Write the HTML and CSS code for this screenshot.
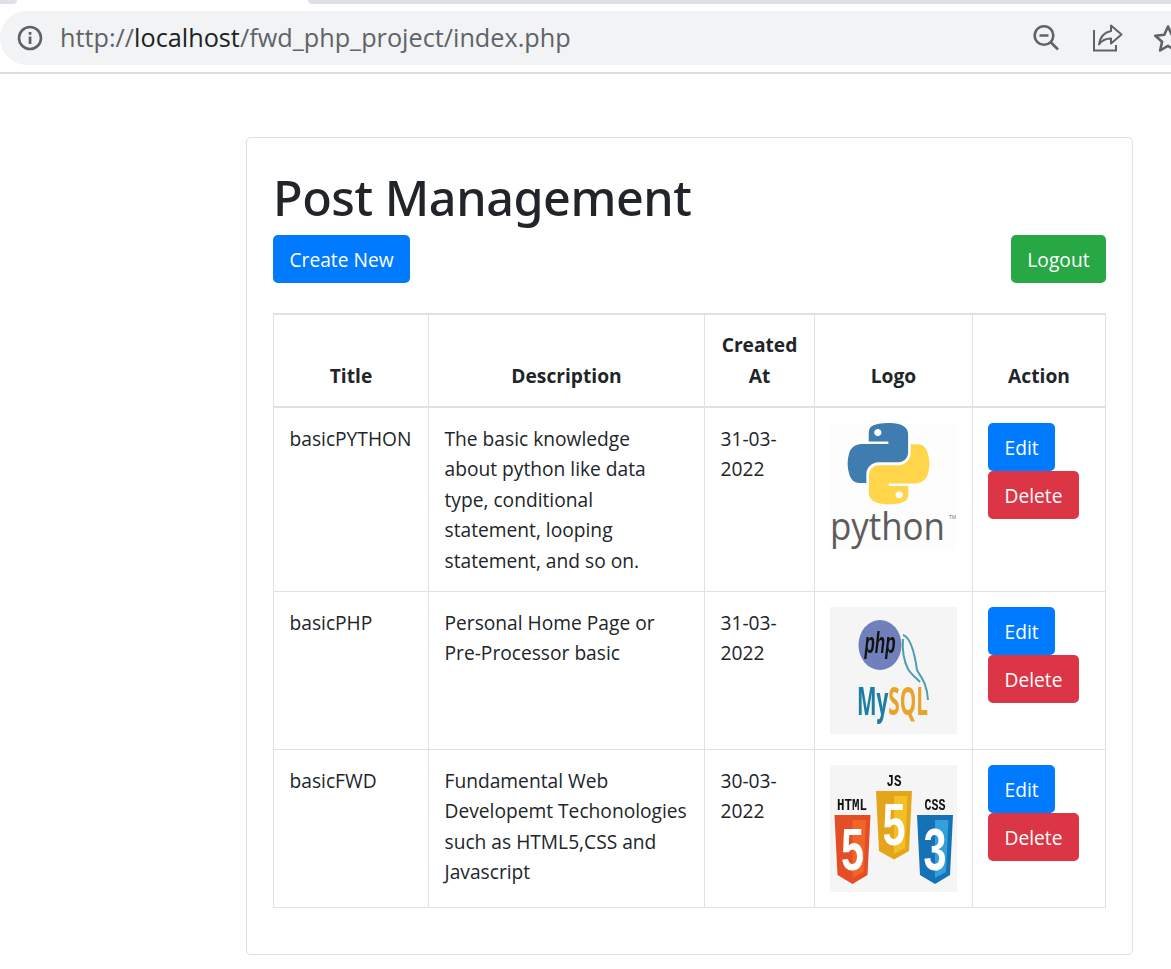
FILE: index.html
```html
<!DOCTYPE html>
<html lang="en">
<head>
    <meta charset="UTF-8">
    <meta name="viewport" content="width=device-width, initial-scale=1.0">
    <title>Post Management</title>
    <link rel="stylesheet" href="styles.css">
</head>
<body>
    <header class="browser">
        <div class="tabs">
            <div class="tab-left"></div>
            <div class="tab-active"></div>
            <div class="tab-right"></div>
        </div>
        <div class="address-bar">
            <svg class="icon-info" width="26" height="26" viewBox="0 0 26 26">
                <circle cx="13" cy="13" r="11" fill="none" stroke="#5f6368" stroke-width="2.6"/>
                <rect x="11.7" y="11.5" width="2.7" height="7.5" fill="#5f6368"/>
                <rect x="11.7" y="7" width="2.7" height="2.8" fill="#5f6368"/>
            </svg>
            <div class="url">http://<span class="host">localhost</span>/fwd_php_project/index.php</div>
            <svg class="icon-zoom" width="28" height="28" viewBox="0 0 28 28">
                <circle cx="12" cy="11.5" r="9.3" fill="none" stroke="#5f6368" stroke-width="2.6"/>
                <path d="M7.5 11.5h9M18.5 18l7.5 7.5" fill="none" stroke="#5f6368" stroke-width="2.6"/>
            </svg>
            <svg class="icon-share" width="30" height="28" viewBox="0 0 30 28">
                <path d="M1 6v20.5h22V21" fill="none" stroke="#5f6368" stroke-width="2"/>
                <path d="M18 1.5l10.5 9-10.5 9v-5c-5 0-9 1.5-12 6 1-8 5-12 12-13.5z" fill="none" stroke="#5f6368" stroke-width="2" stroke-linejoin="round"/>
            </svg>
            <svg class="icon-star" width="30" height="28" viewBox="0 0 30 28">
                <path d="M15 2.5l3.7 8.3 9 .9-6.8 6 2 8.8-7.900-4.600-7.900 4.600 2-8.800-6.800-6 9-.9z" fill="none" stroke="#5f6368" stroke-width="2.600" stroke-linejoin="round"/>
            </svg>
        </div>
        <div class="browser-line"></div>
    </header>

    <main class="page">
        <div class="card">
            <h1>Post Management</h1>
            <div class="toolbar">
                <a class="btn btn-blue">Create New</a>
                <a class="btn btn-green">Logout</a>
            </div>
            <table>
                <colgroup>
                    <col class="col-title">
                    <col class="col-desc">
                    <col class="col-date">
                    <col class="col-logo">
                    <col class="col-action">
                </colgroup>
                <thead>
                    <tr>
                        <th>Title</th>
                        <th>Description</th>
                        <th>Created At</th>
                        <th>Logo</th>
                        <th>Action</th>
                    </tr>
                </thead>
                <tbody>
                    <tr class="row-tall">
                        <td>basicPYTHON</td>
                        <td>The basic knowledge about python like data type, conditional statement, looping statement, and so on.</td>
                        <td>31-03-2022</td>
                        <td>
                            <svg class="logo logo-python" viewBox="0 0 127 127">
                                <g transform="translate(17 0) scale(0.755 0.74)">
                                    <path fill="#3f7cb0" fill-rule="evenodd" d="M54.900 0c-4.600 0-9 .4-12.800 1.100C30.800 3.100 28.800 7.200 28.800 14.900V25h26v3.400H19c-7.600 0-14.200 4.600-16.300 13.200-2.400 9.900-2.500 16.100 0 26.400 1.800 7.700 6.300 13.200 13.900 13.200h9V69c0-8.600 7.400-16.100 16.300-16.100h26c7.200 0 13-6 13-13.200V14.900c0-7-5.900-12.300-13-13.500C63.400.4 59.500 0 54.900 0zM40.800 8c2.700 0 4.900 2.200 4.900 4.900 0 2.700-2.200 4.900-4.900 4.900-2.700 0-4.900-2.200-4.900-4.900C36 10.200 38.100 8 40.800 8z"/>
                                    <path transform="rotate(180 55 55)" fill="#ffd64a" fill-rule="evenodd" d="M54.900 0c-4.600 0-9 .4-12.800 1.100C30.800 3.100 28.800 7.200 28.800 14.900V25h26v3.400H19c-7.600 0-14.200 4.600-16.300 13.200-2.400 9.900-2.500 16.100 0 26.400 1.800 7.700 6.300 13.200 13.900 13.200h9V69c0-8.600 7.400-16.100 16.300-16.100h26c7.200 0 13-6 13-13.200V14.900c0-7-5.900-12.300-13-13.500C63.400.4 59.500 0 54.900 0zM40.800 8c2.700 0 4.900 2.200 4.900 4.900 0 2.700-2.200 4.900-4.900 4.900-2.700 0-4.900-2.200-4.900-4.900C36 10.200 38.100 8 40.800 8z"/>
                                </g>
                                <text class="py-word" x="0" y="117" textLength="115" lengthAdjust="spacingAndGlyphs">python</text>
                                <text class="py-tm" x="119" y="96" textLength="7" lengthAdjust="spacingAndGlyphs">TM</text>
                            </svg>
                        </td>
                        <td>
                            <a class="btn btn-blue">Edit</a>
                            <a class="btn btn-red">Delete</a>
                        </td>
                    </tr>
                    <tr class="row-short">
                        <td>basicPHP</td>
                        <td>Personal Home Page or Pre-Processor basic</td>
                        <td>31-03-2022</td>
                        <td>
                            <svg class="logo logo-soft" viewBox="0 0 127 127">
                                <ellipse cx="50" cy="38" rx="21.500" ry="25" fill="#6f80bb"/>
                                <text class="php-word" x="50" y="46" text-anchor="middle" textLength="31" lengthAdjust="spacingAndGlyphs">php</text>
                                <path d="M73 28c7 2 11 14 14 35 3 6 10 12 11 30M73 32c-1 12 1 22 5 30 3 5 8 9 12 13" fill="none" stroke="#4f9db3" stroke-width="2"/>
                                <text class="mysql-word" x="27" y="108" textLength="71" lengthAdjust="spacingAndGlyphs"><tspan fill="#1d7ea3">My</tspan><tspan fill="#e9a32a">SQL</tspan></text>
                            </svg>
                        </td>
                        <td>
                            <a class="btn btn-blue">Edit</a>
                            <a class="btn btn-red">Delete</a>
                        </td>
                    </tr>
                    <tr class="row-short">
                        <td>basicFWD</td>
                        <td>Fundamental Web Developemt Techonologies such as HTML5,CSS and Javascript</td>
                        <td>30-03-2022</td>
                        <td>
                            <svg class="logo logo-soft" viewBox="0 0 127 127">
                                <text class="web-label" x="22" y="45" text-anchor="middle" textLength="30" lengthAdjust="spacingAndGlyphs">HTML</text>
                                <text class="web-label" x="64" y="21" text-anchor="middle" textLength="15" lengthAdjust="spacingAndGlyphs">JS</text>
                                <text class="web-label" x="105" y="45" text-anchor="middle" textLength="21" lengthAdjust="spacingAndGlyphs">CSS</text>
                                <path d="M4.500 50h36l-3 60-15 9-15-9z" fill="#e44d26"/>
                                <path d="M22.500 55h13.500l-2.500 52-11 6z" fill="#f16529"/>
                                <text class="web-digit" x="22.500" y="105" text-anchor="middle" textLength="23" lengthAdjust="spacingAndGlyphs">5</text>
                                <path d="M46 26h36l-3 60-15 8.500-15-8.500z" fill="#e5a51b"/>
                                <path d="M64 31h13.500l-2.500 52-11 6z" fill="#f2bf26"/>
                                <text class="web-digit" x="64" y="80" text-anchor="middle" textLength="23" lengthAdjust="spacingAndGlyphs">5</text>
                                <path d="M87 50h36l-3 60-15 9-15-9z" fill="#1572b6"/>
                                <path d="M105 55h13.500l-2.500 52-11 6z" fill="#33a0dc"/>
                                <text class="web-digit" x="105" y="105" text-anchor="middle" textLength="23" lengthAdjust="spacingAndGlyphs">3</text>
                            </svg>
                        </td>
                        <td>
                            <a class="btn btn-blue">Edit</a>
                            <a class="btn btn-red">Delete</a>
                        </td>
                    </tr>
                </tbody>
            </table>
        </div>
    </main>
</body>
</html>
```

FILE: styles.css
```css
* {
    box-sizing: border-box;
}

body {
    margin: 0;
    background: #fff;
    color: #212529;
    font-family: 'Open Sans', 'Noto Sans', sans-serif;
    font-size: 19.2px;
    line-height: 30.4px;
}

/* browser chrome */
.tabs {
    display: flex;
    height: 4px;
}

.tab-left {
    width: 17px;
    background: #dee1e6;
    border-bottom-right-radius: 4px;
}

.tab-active {
    width: 291px;
}

.tab-right {
    flex: 1;
    background: #dee1e6;
    border-bottom-left-radius: 4px;
}

.address-bar {
    display: flex;
    align-items: center;
    height: 54px;
    margin-top: 7px;
    padding-left: 17px;
    background: #f1f3f4;
    border-radius: 27px 0 0 27px;
    overflow: hidden;
}

.url {
    margin-left: 17px;
    margin-top: -2px;
    width: 972px;
    flex-shrink: 0;
    font-size: 25.25px;
    color: #5f6368;
    white-space: nowrap;
}

.host {
    color: #202124;
}

.icon-info, .icon-zoom, .icon-share, .icon-star {
    flex-shrink: 0;
}

.icon-share {
    margin-left: 33px;
}

.icon-star {
    margin-left: 30px;
}

.browser-line {
    height: 2px;
    margin-top: 7px;
    background: #dcdcdc;
}

/* page */
.page {
    padding: 63px 0 14px 246px;
}

.card {
    width: 887px;
    height: 818px;
    padding: 27px 26px 0;
    border: 1px solid #dfdfdf;
    border-radius: 5px;
}

h1 {
    margin: 0 0 6px;
    font-family: 'Noto Sans', sans-serif;
    font-size: 48.5px;
    font-weight: 500;
    letter-spacing: -0.44px;
    line-height: 64px;
}

.toolbar {
    display: flex;
    justify-content: space-between;
    margin-bottom: 30px;
}

.btn {
    display: inline-block;
    height: 48px;
    padding: 0 16.5px;
    border-radius: 5px;
    color: #fff;
    line-height: 50px;
    vertical-align: top;
}

.btn-blue {
    background: #007bff;
}

.btn-green {
    background: #28a745;
}

.btn-red {
    background: #dc3545;
}

table {
    width: 832px;
    table-layout: fixed;
    border-collapse: collapse;
}

.col-title { width: 155px; }
.col-desc { width: 276px; }
.col-date { width: 110px; }
.col-logo { width: 158px; }
.col-action { width: 133px; }

th, td {
    padding: 16px 17px 15px 15.5px;
    border: 1px solid #dee2e6;
    text-align: left;
    vertical-align: top;
}

td:nth-child(n+4) {
    padding: 15px;
}

th {
    height: 93px;
    border-top-width: 2px;
    border-bottom-width: 2px;
    padding: 15px;
    font-weight: 700;
    text-align: center;
    vertical-align: bottom;
}

.row-tall {
    height: 184px;
}

.row-short {
    height: 158px;
}

/* logos */
.logo {
    display: block;
    width: 127px;
    height: 127px;
}

.logo-python {
    background: #fdfdfd;
}

.logo-soft {
    background: #f5f5f5;
    filter: blur(0.4px);
}

.py-word {
    font-family: 'Open Sans', sans-serif;
    font-size: 38px;
    fill: #5c5c5c;
}

.py-tm {
    font-family: 'Liberation Sans', sans-serif;
    font-size: 5px;
    fill: #777;
}

.php-word {
    font-family: 'Liberation Sans', sans-serif;
    font-size: 30px;
    font-style: italic;
    font-weight: 700;
    fill: #111;
}

.mysql-word {
    font-family: 'Open Sans', sans-serif;
    font-size: 40px;
    font-weight: 700;
}

.web-label {
    font-family: 'Liberation Mono', monospace;
    font-size: 16px;
    font-weight: 700;
    fill: #111;
}

.web-digit {
    font-family: 'Liberation Sans', sans-serif;
    font-size: 60px;
    font-weight: 700;
    fill: #fff;
}
```
